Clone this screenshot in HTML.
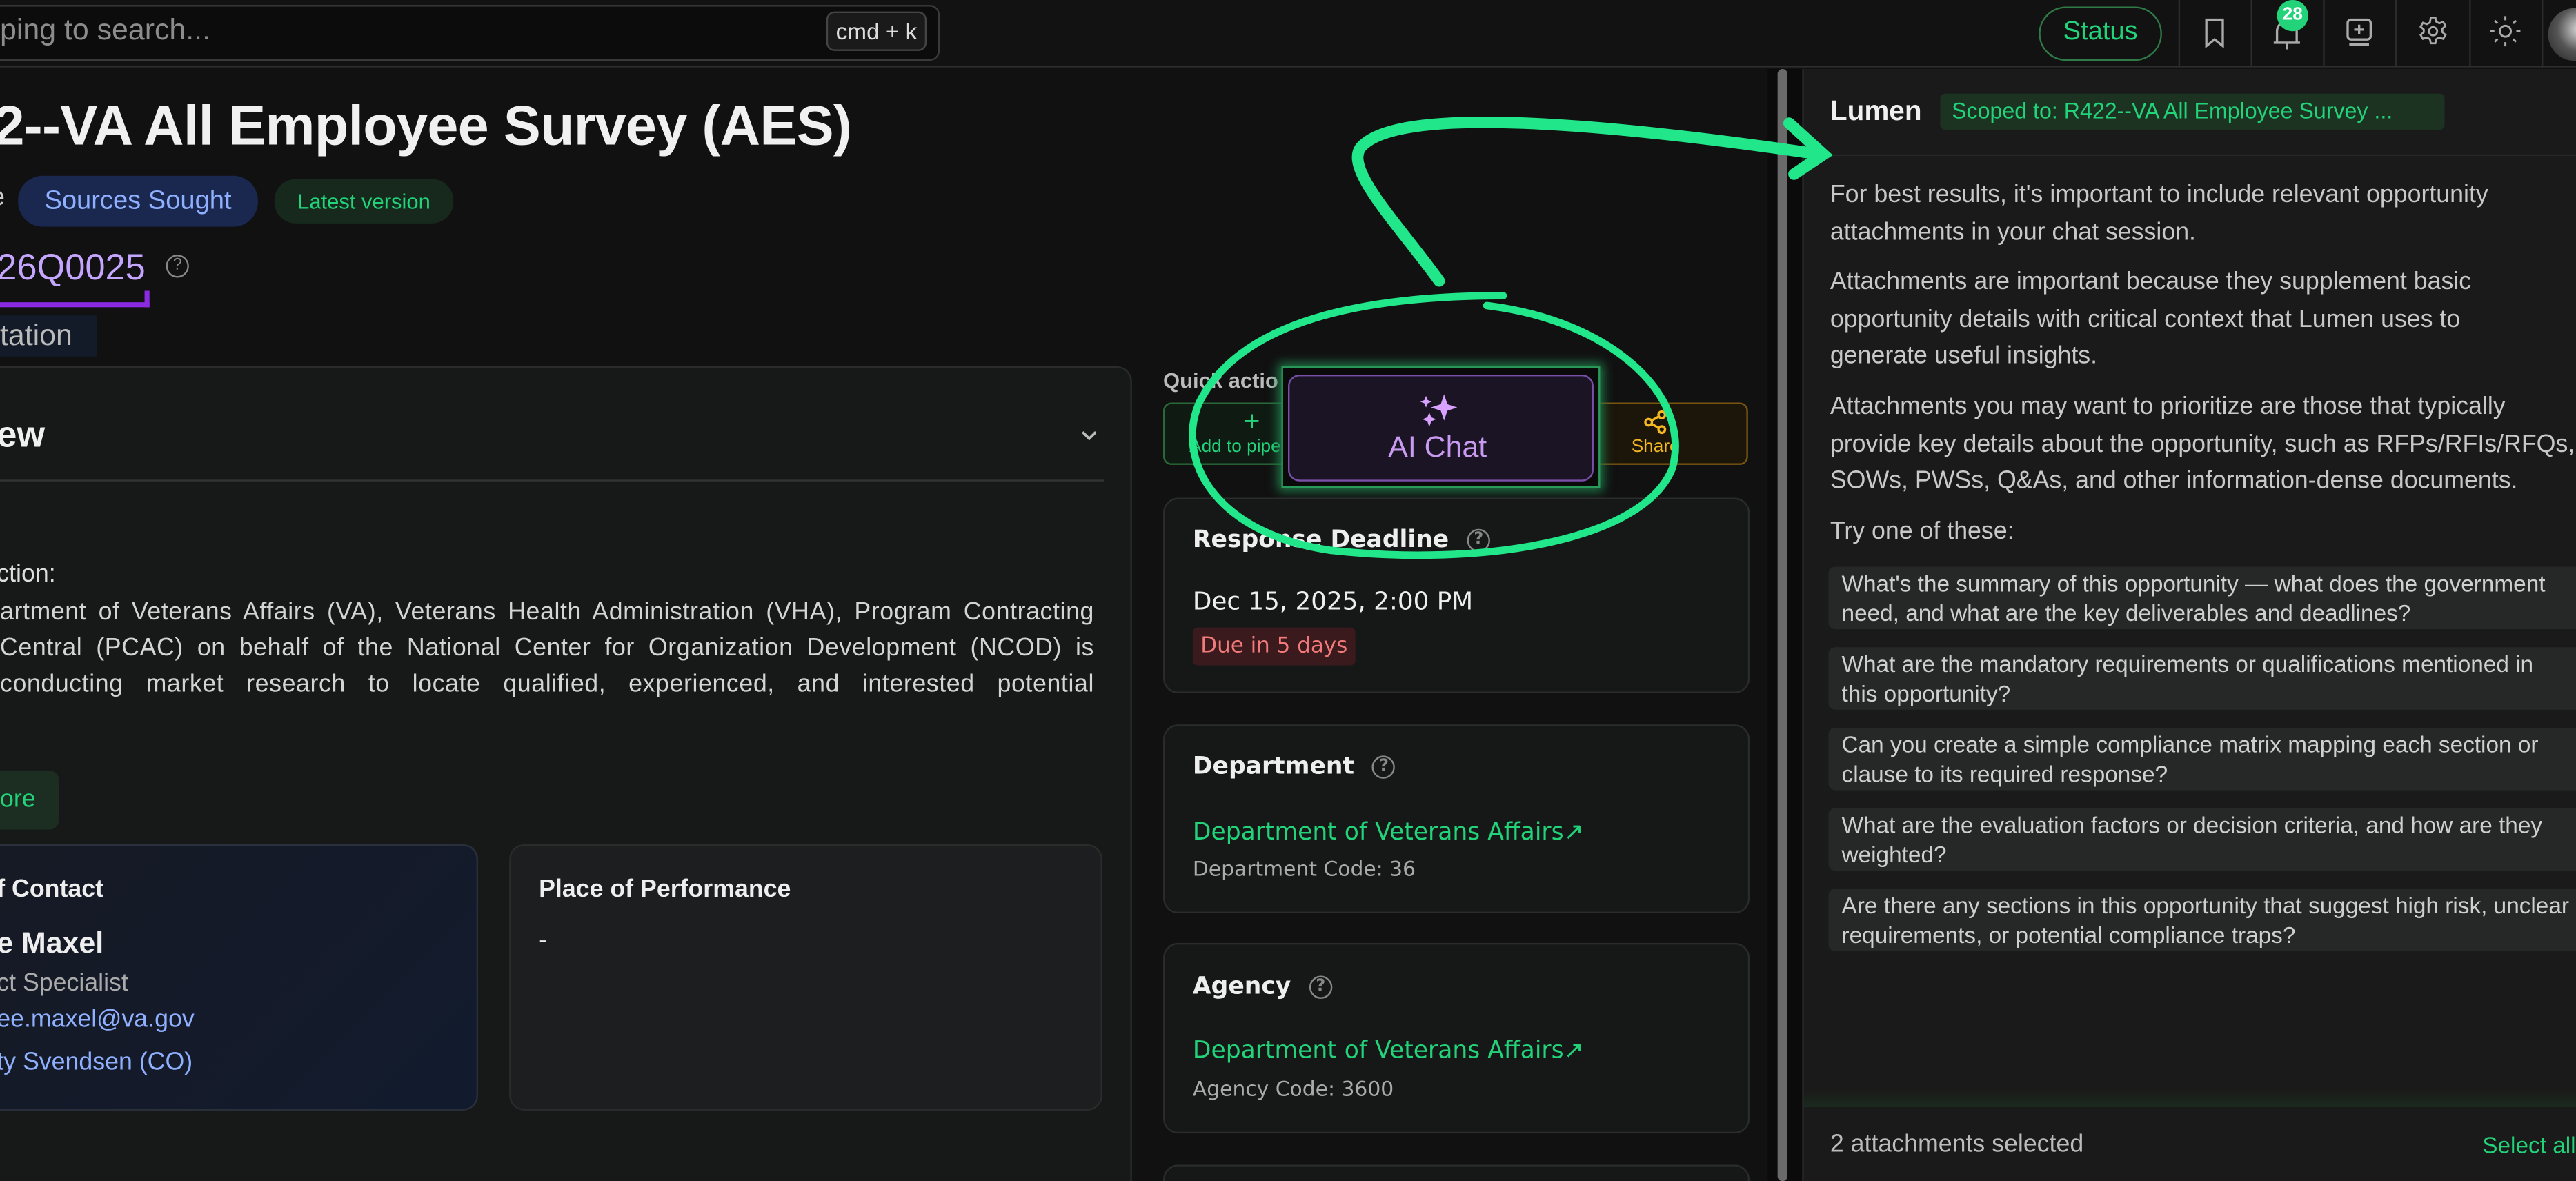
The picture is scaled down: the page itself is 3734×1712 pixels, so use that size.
<!DOCTYPE html>
<html><head><meta charset="utf-8"><style>
*{box-sizing:border-box;margin:0;padding:0}
html,body{width:3734px;height:1712px;overflow:hidden;background:#111}
#s{position:absolute;left:0;top:0;width:1568px;height:719px;transform:scale(2.38138);transform-origin:0 0;background:#111;font-family:"Liberation Sans",sans-serif;color:#e6e6e6;overflow:hidden}
.a{position:absolute;white-space:nowrap}
.card{position:absolute;border:1px solid #2a2c2c;border-radius:9px;background:#161818}
.dv{font-family:"DejaVu Sans","Liberation Sans",sans-serif}
.q{display:inline-block;width:14px;height:14px;border:1.3px solid #888;border-radius:50%;font-size:10px;color:#888;text-align:center;line-height:12px;vertical-align:middle}
.sg{position:absolute;left:1113px;width:470px;background:#262828;border-radius:4px;padding:0 8px;font-size:14px;line-height:18px;color:#cfcfcf;display:flex;flex-direction:column;justify-content:center}
.p{font-size:15px;line-height:22.5px;color:#c8c8c8}
.sep{position:absolute;top:0;width:1px;height:41px;background:#2c2c2c}
.j{letter-spacing:0.25px}
</style></head><body><div id="s">
<div class="a" style="left:0;top:0;width:1568px;height:41px;background:#121212;border-bottom:1px solid #2e2e2e"></div>
<div class="a" style="left:-10px;top:3px;width:582px;height:34px;border:1.5px solid #3a3a3a;border-radius:6px;background:#0c0c0c"></div>
<div class="a" style="left:0;top:8px;font-size:18px;color:#8c8c8c">ping to search...</div>
<div class="a" style="left:503px;top:7px;width:61px;height:24px;border:1px solid #444;border-radius:5px;background:#1a1a1a;font-size:14px;color:#ddd;text-align:center;line-height:22px">cmd + k</div>
<div class="a" style="left:1241px;top:4px;width:75px;height:33px;border:1.5px solid #2f7a47;border-radius:17px;color:#22d37a;font-size:16px;text-align:center;line-height:30px">Status</div>
<div class="sep" style="left:1326px"></div><div class="sep" style="left:1370px"></div><div class="sep" style="left:1414px"></div><div class="sep" style="left:1458px"></div><div class="sep" style="left:1503px"></div><div class="sep" style="left:1547px"></div>
<svg class="a" style="left:1338px;top:10px" width="20" height="20" viewBox="0 0 20 20" fill="none" stroke="#aaa" stroke-width="1.4"><path d="M5 2h10v16l-5-4-5 4z"/></svg>
<svg class="a" style="left:1382px;top:10px" width="20" height="22" viewBox="0 0 20 22" fill="none" stroke="#aaa" stroke-width="1.4"><path d="M4 16V9a6 6 0 0112 0v7zM2 16h16M10 16v4"/></svg>
<div class="a" style="left:1386px;top:0;width:19px;height:19px;border-radius:50%;background:#22d37a;color:#fff;font-size:11px;font-weight:bold;text-align:center;line-height:19px">28</div>
<svg class="a" style="left:1426px;top:10px" width="20" height="20" viewBox="0 0 20 20" fill="none" stroke="#aaa" stroke-width="1.4"><rect x="3" y="2" width="14" height="12" rx="2"/><path d="M4 17h12M10 5v6M7 8h6"/></svg>
<svg class="a" style="left:1471px;top:9px" width="20" height="20" viewBox="0 0 24 24" fill="none" stroke="#aaa" stroke-width="1.4"><circle cx="12" cy="12" r="3"/><path d="M10.3 2h3.4l.6 3 2.2 1.2 2.9-1 1.7 2.9-2.3 2v2.6l2.3 2-1.7 2.9-2.9-1-2.2 1.2-.6 3h-3.4l-.6-3-2.2-1.2-2.9 1-1.7-2.9 2.3-2V10.7l-2.3-2 1.7-2.9 2.9 1 2.2-1.2z"/></svg>
<svg class="a" style="left:1515px;top:9px" width="20" height="20" viewBox="0 0 24 24" fill="none" stroke="#aaa" stroke-width="1.5"><circle cx="12" cy="12" r="4"/><path d="M12 1v3M12 20v3M1 12h3M20 12h3M4.2 4.2l2.1 2.1M17.7 17.7l2.1 2.1M4.2 19.8l2.1-2.1M17.7 6.3l2.1-2.1"/></svg>
<div class="a" style="left:1551px;top:5px;width:32px;height:32px;border-radius:50%;background:radial-gradient(circle at 60% 40%,#ddd,#555 50%,#222)"></div>

<div class="a" style="left:-4px;top:58px;font-size:34px;font-weight:bold;color:#f0f0f0;letter-spacing:-0.3px">2--VA All Employee Survey (AES)</div>
<div class="a" style="left:-6px;top:112px;font-size:16px;color:#ccc">e</div>
<div class="a" style="left:11px;top:107px;width:146px;height:31px;border-radius:15px;background:#1a2850;color:#8fb0ff;font-size:16px;text-align:center;line-height:31px">Sources Sought</div>
<div class="a" style="left:167px;top:109px;width:109px;height:27px;border-radius:13px;background:#16291c;color:#22d37a;font-size:13px;text-align:center;line-height:27px">Latest version</div>
<div class="a" style="left:-2px;top:150px;font-size:22px;color:#c4a6ff">26Q0025</div>
<div class="a" style="left:101px;top:153px"><span class="q">?</span></div>
<div class="a" style="left:0;top:184px;width:91px;height:3px;background:#8a2be2"></div>
<div class="a" style="left:88px;top:177px;width:3px;height:10px;background:#8a2be2"></div>
<div class="a" style="left:0;top:192px;width:59px;height:25px;background:#131a28;font-size:18px;color:#bbb;line-height:25px">tation</div>

<div class="card" style="left:-20px;top:223px;width:709px;height:506px;background:#171818"></div>
<div class="a" style="left:-2px;top:252px;font-size:22px;font-weight:bold;color:#f0f0f0">ew</div>
<svg class="a" style="left:656px;top:259px" width="14" height="12" viewBox="0 0 14 12" fill="none" stroke="#bbb" stroke-width="1.6"><path d="M3 4l4 4 4-4"/></svg>
<div class="a" style="left:0;top:292px;width:672px;height:1px;background:#333"></div>
<div class="a" style="left:-2px;top:341px;font-size:15px;color:#ddd">ction:</div>
<div class="a p j" style="left:0;top:362px;width:666px;text-align:justify;text-align-last:justify;white-space:normal;color:#d4d4d4">artment of Veterans Affairs (VA), Veterans Health Administration (VHA), Program Contracting</div>
<div class="a p j" style="left:0;top:384px;width:666px;text-align:justify;text-align-last:justify;white-space:normal;color:#d4d4d4">Central (PCAC) on behalf of the National Center for Organization Development (NCOD) is</div>
<div class="a p j" style="left:0;top:406px;width:666px;text-align:justify;text-align-last:justify;white-space:normal;color:#d4d4d4">conducting market research to locate qualified, experienced, and interested potential</div>
<div class="a" style="left:-10px;top:469px;width:46px;height:36px;border-radius:6px;background:#1b2e21;color:#22d37a;font-size:15px;line-height:36px;padding-left:10px">ore</div>

<div class="card" style="left:-20px;top:514px;width:311px;height:162px;background:linear-gradient(135deg,#161a24,#121b2e);border-color:#2a303c"></div>
<div class="a" style="left:-2px;top:533px;font-size:15px;font-weight:bold;color:#eee">f Contact</div>
<div class="a" style="left:-2px;top:564px;font-size:18px;font-weight:bold;color:#eee">e Maxel</div>
<div class="a" style="left:-2px;top:590px;font-size:15px;color:#aaa">ct Specialist</div>
<div class="a" style="left:-2px;top:612px;font-size:15px;color:#8fb0ff">ee.maxel@va.gov</div>
<div class="a" style="left:-2px;top:638px;font-size:15px;color:#8fb0ff">ty Svendsen (CO)</div>
<div class="card" style="left:310px;top:514px;width:361px;height:162px;background:#1c1e1f"></div>
<div class="a" style="left:328px;top:533px;font-size:15px;font-weight:bold;color:#eee">Place of Performance</div>
<div class="a" style="left:328px;top:564px;font-size:15px;color:#eee">-</div>

<div class="a" style="left:708px;top:224px;font-size:13px;font-weight:bold;color:#bbb">Quick actio</div>
<div class="a" style="left:708px;top:245px;width:100px;height:38px;border:1px solid #2a6a3a;border-radius:5px;background:#0f1a12"></div>
<div class="a" style="left:757px;top:247px;font-size:17px;color:#22d37a">+</div>
<div class="a" style="left:724px;top:266px;font-size:11px;color:#22d37a">Add to pipe</div>
<div class="a" style="left:940px;top:245px;width:124px;height:38px;border:1px solid #7a5510;border-radius:5px;background:#1b150a"></div>
<svg class="a" style="left:1000px;top:249px" width="16" height="16" viewBox="0 0 16 16" fill="none" stroke="#f5b820" stroke-width="1.4"><circle cx="11.5" cy="3.5" r="2"/><circle cx="3.5" cy="8" r="2"/><circle cx="11.5" cy="12.5" r="2"/><path d="M5.3 7l4.4-2.5M5.3 9l4.4 2.5"/></svg>
<div class="a" style="left:993px;top:266px;font-size:11px;color:#f5b820">Share</div>
<div class="a" style="left:780px;top:223px;width:194px;height:74px;background:#0a0a0a;box-shadow:0 0 6px 2px #1f7a4a;border:1px solid #2a9a5a"></div>
<div class="a" style="left:784px;top:228px;width:186px;height:65px;border:1.5px solid #7a4fa8;border-radius:7px;background:#1b1425"></div>
<svg class="a" style="left:862px;top:238px" width="28" height="26" viewBox="0 0 28 26" fill="#d8a0ff"><path d="M17 2l2 6 6 2-6 2-2 6-2-6-6-2 6-2z"/><path d="M6 3l1 2.5 2.5 1-2.5 1L6 10 5 7.5 2.5 6.5 5 5.5z"/><path d="M8 13l1.2 3 3 1.2-3 1.2L8 22l-1.2-3.6-3-1.2 3-1.2z"/></svg>
<div class="a" style="left:845px;top:262px;font-size:18px;color:#c89af0">AI Chat</div>

<div class="card dv" style="left:708px;top:303px;width:357px;height:119px"></div>
<div class="a dv" style="left:726px;top:321px;font-size:14.5px;font-weight:bold;color:#eee">Response Deadline <span class="q" style="margin-left:6px">?</span></div>
<div class="a dv" style="left:726px;top:357px;font-size:15px;color:#eee">Dec 15, 2025, 2:00 PM</div>
<div class="a dv" style="left:726px;top:382px;width:99px;height:23px;background:#3a1a1d;border-radius:3px;color:#f27a7a;font-size:13px;line-height:23px;text-align:center">Due in 5 days</div>

<div class="card" style="left:708px;top:441px;width:357px;height:115px"></div>
<div class="a dv" style="left:726px;top:459px;font-size:14.5px;font-weight:bold;color:#eee">Department <span class="q" style="margin-left:6px">?</span></div>
<div class="a dv" style="left:726px;top:499px;font-size:14.5px;color:#22d37a">Department of Veterans Affairs&#x2197;&#xFE0E;</div>
<div class="a dv" style="left:726px;top:521px;font-size:12.5px;color:#aaa">Department Code: 36</div>

<div class="card" style="left:708px;top:574px;width:357px;height:116px"></div>
<div class="a dv" style="left:726px;top:593px;font-size:14.5px;font-weight:bold;color:#eee">Agency <span class="q" style="margin-left:6px">?</span></div>
<div class="a dv" style="left:726px;top:632px;font-size:14.5px;color:#22d37a">Department of Veterans Affairs&#x2197;&#xFE0E;</div>
<div class="a dv" style="left:726px;top:655px;font-size:12.5px;color:#aaa">Agency Code: 3600</div>
<div class="card" style="left:708px;top:709px;width:357px;height:10px;border-bottom:none;border-radius:9px 9px 0 0"></div>

<div class="a" style="left:1076px;top:42px;width:22px;height:677px;background:#0b0b0b"></div>
<div class="a" style="left:1082px;top:42px;width:6px;height:677px;background:#6a6a6a;border-radius:3px"></div>
<div class="a" style="left:1097px;top:42px;width:1px;height:677px;background:#2e2e2e"></div>

<div class="a" style="left:1098px;top:42px;width:470px;height:677px;background:#1a1a1a"></div>
<div class="a" style="left:1098px;top:94px;width:470px;height:1px;background:#262626"></div>
<div class="a" style="left:1114px;top:58px;font-size:17px;font-weight:bold;color:#f0f0f0">Lumen</div>
<div class="a" style="left:1181px;top:57px;width:307px;height:22px;background:#1d3322;border-radius:3px;color:#22d37a;font-size:13.5px;line-height:22px;padding-left:7px">Scoped to: R422--VA All Employee Survey ...</div>
<div class="a p" style="left:1114px;top:108px">For best results, it's important to include relevant opportunity<br>attachments in your chat session.</div>
<div class="a p" style="left:1114px;top:161px">Attachments are important because they supplement basic<br>opportunity details with critical context that Lumen uses to<br>generate useful insights.</div>
<div class="a p" style="left:1114px;top:237px">Attachments you may want to prioritize are those that typically<br>provide key details about the opportunity, such as RFPs/RFIs/RFQs,<br>SOWs, PWSs, Q&amp;As, and other information-dense documents.</div>
<div class="a p" style="left:1114px;top:313px">Try one of these:</div>
<div class="sg" style="top:345px;height:38px"><div>What's the summary of this opportunity — what does the government</div><div>need, and what are the key deliverables and deadlines?</div></div>
<div class="sg" style="top:394px;height:38px"><div>What are the mandatory requirements or qualifications mentioned in</div><div>this opportunity?</div></div>
<div class="sg" style="top:443px;height:38px"><div>Can you create a simple compliance matrix mapping each section or</div><div>clause to its required response?</div></div>
<div class="sg" style="top:492px;height:38px"><div>What are the evaluation factors or decision criteria, and how are they</div><div>weighted?</div></div>
<div class="sg" style="top:541px;height:38px"><div>Are there any sections in this opportunity that suggest high risk, unclear</div><div>requirements, or potential compliance traps?</div></div>
<div class="a" style="left:1098px;top:664px;width:470px;height:10px;background:linear-gradient(#1a1a1a,#1b2a1f)"></div>
<div class="a" style="left:1098px;top:674px;width:470px;height:45px;background:#1a1a1a"></div>
<div class="a" style="left:1114px;top:688px;font-size:15px;color:#bbb">2 attachments selected</div>
<div class="a" style="left:1511px;top:689px;font-size:14px;color:#22d37a">Select all</div>

<svg class="a" style="left:0;top:0" width="1568" height="719" viewBox="0 0 1568 719" fill="none" stroke="#22e68a" stroke-linecap="round">
<path d="M876 171 C850 135 815 100 830 88 C850 70 930 68 1108 94" stroke-width="7"/>
<path d="M1089 75 L1110 94 L1092 106" stroke-width="7"/>
<path d="M905 186 C980 195 1030 240 1018 285 C1000 330 900 345 810 335 C740 325 715 280 730 245 C755 195 830 180 915 180" stroke-width="4.5"/>
</svg>
</div></body></html>
